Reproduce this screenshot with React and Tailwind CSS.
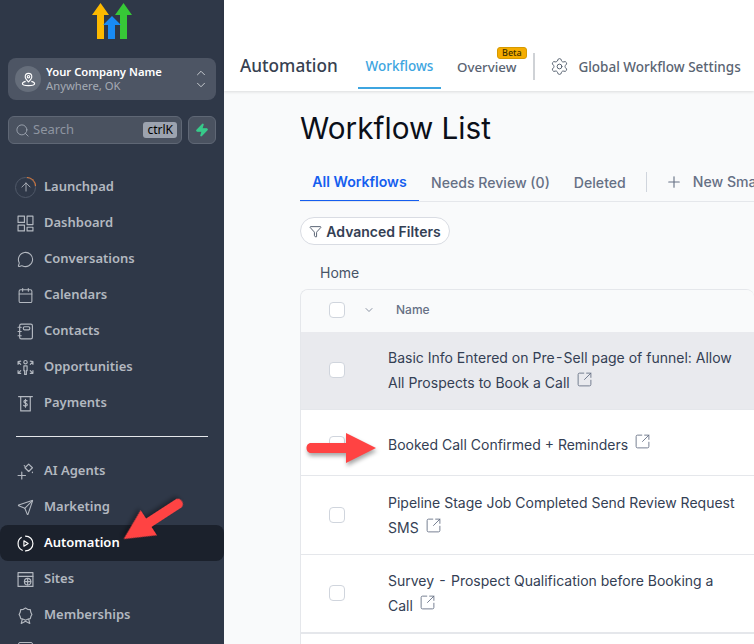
import { Search, Zap, ChevronUp, ChevronDown, MessageCircle, Calendar, Send, Settings, Plus, Funnel, SquareArrowOutUpRight, ArrowUp } from 'lucide-react'

function Glyph({ children }) {
  return (
    <svg width="17" height="17" viewBox="0 0 16 16" fill="none" stroke="currentColor" strokeWidth="1.1" strokeLinecap="round" strokeLinejoin="round" className="shrink-0">
      {children}
    </svg>
  )
}

const DashboardIcon = () => (
  <Glyph>
    <rect x="1" y="1" width="6" height="6" />
    <rect x="9.500" y="1" width="5.500" height="8" />
    <rect x="1" y="9.500" width="6" height="5.500" />
    <rect x="9.500" y="11.500" width="5.500" height="3.500" />
  </Glyph>
)

const ContactsIcon = () => (
  <Glyph>
    <rect x="2.500" y="1" width="12" height="14" rx="1.500" />
    <rect x="6" y="3.500" width="6" height="3" rx="1" />
    <path d="M1 4H4M1 8H4M1 12H4" />
  </Glyph>
)

const OpportunitiesIcon = () => (
  <Glyph>
    <circle cx="8" cy="3" r="1.600" />
    <path d="M6.500 6.500H9.500V11H8.800V14.500H7.200V11H6.500Z" />
    <path d="M1 2.500L3.500 2M1 2.500V5M3.500 5L1 2.500M15 2.500L12.500 2M15 2.500V5M12.500 5L15 2.500M1 13.500V11M1 13.500H3.500M1 13.500L3.500 11M15 13.500V11M15 13.500H12.500M15 13.500L12.500 11" />
  </Glyph>
)

const PaymentsIcon = () => (
  <Glyph>
    <path d="M1.500 1.500H14.500" />
    <path d="M3.500 1.500V15H12.500V1.500" />
    <path d="M9.500 5.500C9 4.800 6.500 4.800 6.500 6.300C6.500 8 9.700 7.300 9.700 9.200C9.700 10.600 7 10.600 6.300 9.700M8 4V11.500" />
  </Glyph>
)

const AgentsIcon = () => (
  <Glyph>
    <path d="M11 1L14.500 4.500L11 8L7.500 4.500Z" />
    <path d="M4.500 8.500V15M1 11.800H8" />
    <path d="M6.800 2.500L7.400 3M14.500 8.500V9" />
  </Glyph>
)

const AutomationIcon = () => (
  <Glyph>
    <path d="M8 1C12 1 15 4.200 15 8C15 11.800 12 15 8 15" />
    <path d="M5 14.300C2.500 13.200 1 10.800 1 8C1 5.600 2.200 3.500 4 2.300" />
    <path d="M6.500 5.500L10.500 8L6.500 10.500Z" />
  </Glyph>
)

const SitesIcon = () => (
  <Glyph>
    <rect x="1" y="1.500" width="14" height="13" />
    <path d="M1 5H15" />
    <circle cx="10" cy="10" r="3" />
    <path d="M7 10H13M10 7V13" />
  </Glyph>
)

const MembershipsIcon = () => (
  <Glyph>
    <path d="M8 1L10 2.200L12.500 2.500L13 5L14 7L13 9L12.500 11L10 11.500L8 12.500L6 11.500L3.500 11L3 9L2 7L3 5L3.500 2.500L6 2.200Z" />
    <path d="M5 11.500L4 15.500L8 13.500L12 15.500L11 11.500" />
  </Glyph>
)

const navTop = [
  { label: 'Dashboard', icon: DashboardIcon },
  { label: 'Conversations', icon: () => <MessageCircle size={17} strokeWidth={1.5} className="shrink-0" /> },
  { label: 'Calendars', icon: () => <Calendar size={17} strokeWidth={1.5} className="shrink-0" /> },
  { label: 'Contacts', icon: ContactsIcon },
  { label: 'Opportunities', icon: OpportunitiesIcon },
  { label: 'Payments', icon: PaymentsIcon },
]

const navBottom = [
  { label: 'AI Agents', icon: AgentsIcon },
  { label: 'Marketing', icon: () => <Send size={17} strokeWidth={1.5} className="shrink-0" /> },
  { label: 'Automation', icon: AutomationIcon, active: true },
  { label: 'Sites', icon: SitesIcon },
  { label: 'Memberships', icon: MembershipsIcon },
]

const rows = [
  { lines: ['Basic Info Entered on Pre\u200A-\u200ASell page of funnel: Allow', 'All Prospects to Book a Call'], h: 'h-[78px] pb-[2px]', bg: 'bg-[#e9eaee]' },
  { lines: ['Booked Call Confirmed + Reminders'], h: 'h-[66px] pt-[3px]', bg: 'bg-white' },
  { lines: ['Pipeline Stage Job Completed Send Review Request', 'SMS'], h: 'h-[79px]', bg: 'bg-white' },
  { lines: ['Survey \u200A-\u200A Prospect Qualification before Booking a', 'Call'], h: 'h-[78px] pb-[2px]', bg: 'bg-white' },
]

function Logo() {
  return (
    <svg width="42" height="38" viewBox="0 0 42 38">
      <path d="M5 36V12H0L8.500 0L17 12H12V36Z" fill="#fdb900" />
      <path d="M28 36V12H23L31.500 0L40 12H35V36Z" fill="#37c837" />
      <path d="M16 36V22H11L20 13L29 22H23V36Z" fill="#188bf6" />
    </svg>
  )
}

function NavItem({ label, icon: Icon, active }) {
  return (
    <div className={`flex h-9 items-center gap-[10px] rounded-lg pl-[17px] font-['Noto_Sans',sans-serif] text-[13px] font-semibold ${active ? 'bg-[#1b212c] text-white' : 'text-[#b3b8c0]'}`}>
      <Icon />
      <span>{label}</span>
    </div>
  )
}

function Launchpad() {
  return (
    <div className="flex h-9 items-center gap-[8px] pl-[15px] font-['Noto_Sans',sans-serif] text-[13px] font-semibold text-[#b3b8c0]">
      <div className="relative flex h-[21px] w-[21px] items-center justify-center rounded-full border border-[#4f5868]">
        <ArrowUp size={14} strokeWidth={1.5} />
        <div className="absolute -right-[1px] -top-[1px] h-[9px] w-[9px] rounded-tr-full border-r border-t border-[#e07b39]" />
      </div>
      <span>Launchpad</span>
    </div>
  )
}

function Checkbox() {
  return <div className="h-4 w-4 rounded-[4px] border border-[#d0d5dd] bg-white" />
}

function Row({ lines, h, bg }) {
  return (
    <div className={`flex items-center border-b border-[#e5e7eb] ${h} ${bg}`}>
      <div className="ml-[28px] mr-[43px]"><Checkbox /></div>
      <div className="text-[14px] leading-[25px] text-[#344054]">
        {lines.map((line, i) => (
          <div key={line} className="flex items-center whitespace-pre">
            {line}
            {i === lines.length - 1 && <SquareArrowOutUpRight size={17} strokeWidth={1.25} className="mb-[5px] ml-[6px] text-[#667085]" />}
          </div>
        ))}
      </div>
    </div>
  )
}

function RedArrow({ className }) {
  return (
    <svg className={className} width="70" height="30" viewBox="0 0 70 30" style={{ filter: 'drop-shadow(1px 3px 2px rgba(0,0,0,0.35))' }}>
      <path d="M5 10H40V0L70 15L40 30V20H5C-1 20 -1 10 5 10Z" fill="#ff4343" />
    </svg>
  )
}

export default function App() {
  return (
    <div className="relative flex h-[644px] w-[754px] overflow-hidden bg-[#f9fafb] font-['Inter',sans-serif]">
      {/* Sidebar */}
      <aside className="flex w-[224px] shrink-0 flex-col overflow-hidden bg-[#2f3848]">
        <div className="ml-[92px] mt-[3px] shrink-0"><Logo /></div>

        <div className="mx-2 mt-[17px] flex h-[42px] shrink-0 items-center rounded-lg bg-[#4d5564] pl-[7px] pr-2 font-['Noto_Sans',sans-serif]">
          <div className="flex h-[26px] w-[26px] items-center justify-center rounded-full bg-[#666e7b]">
            <svg width="15" height="15" viewBox="0 0 16 16" fill="none" stroke="white" strokeWidth="1.2" strokeLinejoin="round">
              <path d="M8 10.500C6 8.500 4.500 7 4.500 5C4.500 3 6 1.500 8 1.500C10 1.500 11.500 3 11.500 5C11.500 7 10 8.500 8 10.500Z" />
              <circle cx="8" cy="5" r="1.300" />
              <path d="M5 10C3 10.500 1.500 11.500 1.500 12.500C1.500 13.800 4.500 14.500 8 14.500C11.500 14.500 14.500 13.800 14.500 12.500C14.500 11.500 13 10.500 11 10" />
            </svg>
          </div>
          <div className="ml-[5px] flex-1 text-[11.25px] leading-[14px]">
            <div className="font-semibold text-white">Your Company Name</div>
            <div className="text-[#a5abb4]">Anywhere, OK</div>
          </div>
          <div className="flex flex-col text-[#d5d8dc]">
            <ChevronUp size={14} strokeWidth={1.5} className="-mb-[2px]" />
            <ChevronDown size={14} strokeWidth={1.5} />
          </div>
        </div>

        <div className="mx-2 mt-4 flex shrink-0 gap-[6px] font-['Noto_Sans',sans-serif]">
          <div className="flex h-7 flex-1 items-center rounded-md border border-[#5f6775] bg-[#4a5260] pl-[6px] pr-1">
            <Search size={15} strokeWidth={1.5} className="text-[#9ca3af]" />
            <span className="ml-[3px] flex-1 text-[13px] text-[#8e95a0]">Search</span>
            <span className="rounded-[3px] bg-[#9ca3af] px-[4px] text-[12px] leading-4 text-black">ctrlK</span>
          </div>
          <div className="flex h-7 w-7 items-center justify-center rounded-md border border-[#5f6775] bg-[#4a5260]">
            <Zap size={14} className="fill-[#37ca8a] text-[#37ca8a]" />
          </div>
        </div>

        <nav className="mt-[25px] shrink-0">
          <Launchpad />
          {navTop.map((item) => <NavItem key={item.label} {...item} />)}
        </nav>

        <div className="mx-4 mb-[16px] mt-[15px] h-px shrink-0 bg-[#e5e7eb]" />

        <nav className="shrink-0">
          {navBottom.map((item) => <NavItem key={item.label} {...item} />)}
        </nav>
        <div className="ml-[18px] mt-[9px] h-4 w-[15px] shrink-0 rounded-[2px] border border-[#b3b8c0]" />
      </aside>

      {/* Main */}
      <main className="flex min-w-0 flex-1 flex-col">
        <header className="flex h-[91px] shrink-0 items-end bg-white pl-4 font-['Noto_Sans',sans-serif] shadow-[0_1px_3px_rgba(0,0,0,0.12)]">
          <div className="mb-[13px] w-[118px] shrink-0 text-[17.2px] font-medium leading-6 text-[#374151]">Automation</div>
          <div className="mb-[2px] mr-4 flex h-[40px] w-[83px] shrink-0 items-center justify-center border-b-2 border-[#3da5e0] pb-[3px] text-[13.5px] font-medium text-[#3da5e0]">Workflows</div>
          <div className="relative mb-[14px] shrink-0 text-[13.3px] font-medium leading-5 text-[#5a6472]">
            Overview
            <span className="absolute -top-[10px] left-[40px] rounded-[3px] border border-[#d69a00] bg-[#f5ac00] px-[4px] text-[9px] leading-[10px] text-[#3d3000]">Beta</span>
          </div>
          <div className="mb-[11px] ml-[17px] h-[27px] w-[2px] shrink-0 bg-[#cfd2d6]" />
          <Settings size={19} strokeWidth={1.25} className="mb-[15px] ml-[15px] shrink-0 text-[#5a6472]" />
          <div className="mb-[14px] ml-[9px] whitespace-nowrap text-[13.5px] font-medium leading-5 text-[#5a6472]">Global Workflow Settings</div>
        </header>

        <div className="min-w-0 pl-[76px]">
          <h1 className="mt-[17px] text-[29.7px] font-normal leading-10 text-[#0b0f19]">Workflow List</h1>

          <div className="mt-[14px] flex h-[40px] items-center overflow-hidden whitespace-nowrap border-b border-[#e5e7eb] text-[14.1px] font-medium text-[#667085]">
            <div className="flex h-[40px] w-[119px] shrink-0 items-center justify-center border-b-2 border-[#155eef] pt-[2px] font-semibold text-[#155eef]">All Workflows</div>
            <span className="ml-3 shrink-0 pt-[2px]">Needs Review (0)</span>
            <span className="ml-6 shrink-0 pt-[2px]">Deleted</span>
            <div className="ml-5 h-5 w-px shrink-0 bg-[#d0d5dd]" />
            <Plus size={18} strokeWidth={1.5} className="ml-[18px] shrink-0" />
            <span className="ml-[10px] shrink-0">New Smart List</span>
          </div>

          <div className="mt-[15px] flex h-7 w-[150px] items-center justify-center gap-[4px] rounded-full border border-[#d9dce3] bg-white text-[14px] font-semibold text-[#344054]">
            <Funnel size={13} strokeWidth={1.5} />
            Advanced Filters
          </div>

          <div className="ml-5 mt-[18px] text-[14px] leading-5 text-[#475467]">Home</div>

          <div className="mt-[6px] overflow-hidden rounded-t-lg border-l border-t border-[#e5e7eb]">
            <div className="flex h-[42px] items-center bg-[#f9fafb] pb-[2px]">
              <div className="ml-[28px]"><Checkbox /></div>
              <ChevronDown size={12} strokeWidth={1.5} className="ml-[18px] text-[#667085]" />
              <span className="ml-[21px] text-[12px] font-medium text-[#667085]">Name</span>
            </div>
            {rows.map((row) => <Row key={row.lines[0]} {...row} />)}
            <div className="h-[20px] border-t border-[#e5e7eb] bg-white" />
          </div>
        </div>
      </main>

      {/* Annotation arrows */}
      <RedArrow className="absolute left-[306px] top-[433px]" />
      <RedArrow className="absolute left-[118px] top-[505px] rotate-[147deg]" />
    </div>
  )
}
